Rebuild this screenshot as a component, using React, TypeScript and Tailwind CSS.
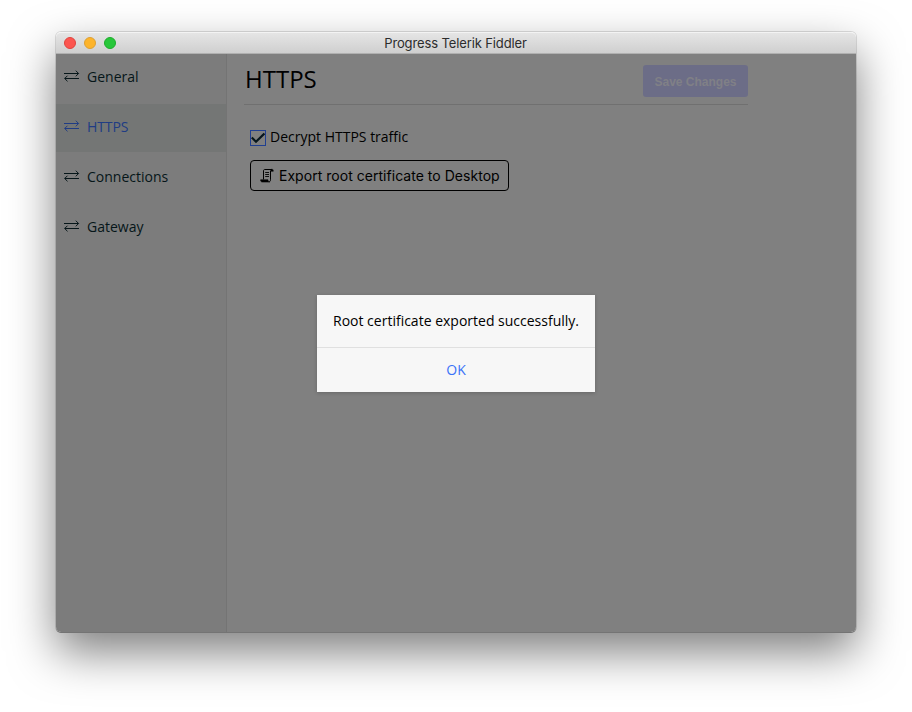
import React from 'react';

function SwapIcon() {
  return (
    <svg width="16" height="12" viewBox="0 0 16 12" fill="none" stroke="currentColor" strokeWidth="1" className="shrink-0">
      <path d="M0 3.5H14.5M11.8 0.7L14.6 3.5L11.8 6.3" />
      <path d="M15 8.5H0.8M3.5 5.7L0.7 8.5L3.5 11.3" />
    </svg>
  );
}

function ScrollIcon() {
  return (
    <svg width="14" height="15" viewBox="0 0 14 15" fill="none" stroke="black" strokeWidth="1" className="shrink-0">
      <path d="M3.5 11.5V3C3.5 1.9 4 1.5 4.8 1.5H12" />
      <path d="M10.6 3.3C10.6 1.9 11 1.2 12 1.2C13 1.2 13.3 1.9 13.3 3.3H10.6Z" fill="black" strokeWidth="0.5" />
      <path d="M0.6 11.8H8C8 13 8.4 14 9.4 14H2.4C1.2 14 0.6 13.2 0.6 11.8Z" fill="black" strokeWidth="0.6" />
      <path d="M9 13.7C10 13.7 10.5 13.1 10.5 11.8V3" />
      <path d="M5.2 4.5H9M5.2 6.5H9M5.2 8.5H9" strokeWidth="0.9" />
    </svg>
  );
}

const items = ['General', 'HTTPS', 'Connections', 'Gateway'];

export default function App() {
  return (
    <div className="flex h-[712px] w-[912px] justify-center overflow-hidden bg-white pt-8 font-['Open_Sans',sans-serif] text-[14px] text-black">
      <div className="relative flex h-[600px] w-[800px] flex-col rounded-[5px] shadow-[0_0_0_1px_rgba(0,0,0,0.12),0_20px_46px_rgba(0,0,0,0.5)]">
        <header className="relative flex h-[22px] shrink-0 items-center rounded-t-[5px] border-t border-b border-t-[#f3f3f3] border-b-[#b0b0b0] bg-linear-to-b from-[#e5e5e5] to-[#cfcfcf] px-2">
          <div className="flex gap-2">
            <span className="size-3 rounded-full border border-[#e0443e] bg-[#fc5650]" />
            <span className="size-3 rounded-full border border-[#dea032] bg-[#fdb42b]" />
            <span className="size-3 rounded-full border border-[#1dad2b] bg-[#27c73a]" />
          </div>
          <h1 className="absolute inset-x-0 pr-px text-center font-['Inter',sans-serif] text-[13px] leading-5 tracking-[-0.12px] text-[#2c2c2c]">
            <span>Progress Telerik Fiddler</span>
          </h1>
        </header>
        <div className="flex min-h-0 flex-1 overflow-hidden rounded-b-[5px] shadow-[0_1px_0_#747474]">
          <nav className="flex w-[171px] shrink-0 flex-col gap-0.5 border-r border-[#747474] bg-[#7c7c7c] text-[#061619]">
            {items.map((name) => (
              <a
                key={name}
                className={
                  name === 'HTTPS'
                    ? 'flex h-12 items-center gap-[7px] bg-[#747675] pb-[4px] pl-2 font-medium tracking-[-0.1px] text-[#203c84]'
                    : 'flex h-12 items-center gap-[7px] pb-[4px] pl-2'
                }
              >
                <SwapIcon />
                <span>{name}</span>
              </a>
            ))}
          </nav>
          <main className="flex-1 bg-[#808080] pl-[17px]">
            <div className="flex h-[51px] w-[504px] items-center justify-between border-b border-[#707070]">
              <h2 className="pl-px text-[24px] leading-8">HTTPS</h2>
              <button className="mt-1 h-8 w-[105px] rounded-[3px] bg-[#6c6d87] pt-px font-['Liberation_Sans',sans-serif] text-[12px] font-bold text-[#808086]">
                <span>Save Changes</span>
              </button>
            </div>
            <div className="flex flex-col items-start pl-[6px] pt-[22px]">
              <label className="flex h-5 items-center gap-1">
                <span className="mt-px flex size-4 items-center justify-center border border-[#203f91]">
                  <svg width="14" height="14" viewBox="0 0 14 14" fill="none" stroke="#07161d" strokeWidth="2.2">
                    <path d="M0.8 6.5L5 10.8L13.4 2.5" />
                  </svg>
                </span>
                <span className="pb-[2px]">Decrypt HTTPS traffic</span>
              </label>
              <button className="mt-[13px] flex h-[31px] w-[259px] items-center gap-[5px] rounded-[4px] border border-black pl-[9px] font-['Inter',sans-serif] text-[14px] tracking-[0.03px]">
                <ScrollIcon />
                <span className="whitespace-nowrap">Export root certificate to Desktop</span>
              </button>
            </div>
          </main>
        </div>
        <div role="dialog" className="absolute left-[261px] top-[263px] flex h-[97px] w-[278px] flex-col bg-[#f7f7f7] shadow-[0_1px_4px_rgba(0,0,0,0.2)]">
          <p className="flex h-[53px] items-center justify-center border-b border-[#e0e0e0] pb-[2px]">
            <span>Root certificate exported successfully.</span>
          </p>
          <button className="flex-1 pb-[2px] font-medium text-[#3b73f8]">
            <span>OK</span>
          </button>
        </div>
      </div>
    </div>
  );
}
